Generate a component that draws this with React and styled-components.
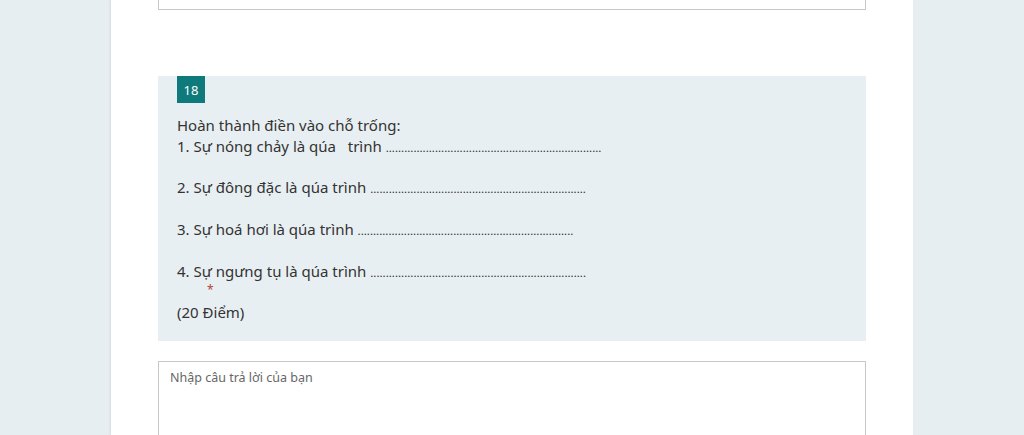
import React from "react";
import styled, { createGlobalStyle } from "styled-components";

const GlobalStyle = createGlobalStyle`
  html, body {
    margin: 0;
    padding: 0;
    background: #e6eef1;
    overflow: hidden;
  }
  body {
    font-family: "Noto Sans", "Open Sans", sans-serif;
  }
`;

const Page = styled.div`
  height: 435px;
  display: flex;
  justify-content: flex-start;
  padding-left: 111px;
`;

const Card = styled.div`
  width: 802px;
  background: #ffffff;
  box-shadow: -1px 0 2px rgba(0, 0, 0, 0.08);
  padding: 0 47px;
  box-sizing: border-box;
`;

const PrevAnswer = styled.div`
  height: 9px;
  border: 1px solid #c8c8c8;
  border-top: none;
  margin-bottom: 66px;
`;

const Question = styled.div`
  background: #e8eff2;
  padding: 0 19px 18px;
  height: 265px;
  box-sizing: border-box;
`;

const Badge = styled.div`
  display: inline-flex;
  align-items: center;
  justify-content: center;
  width: 28px;
  height: 27px;
  background: #0e7a7c;
  color: #ffffff;
  font-size: 13px;
  margin-bottom: 12px;
`;

const Line = styled.div`
  font-size: 15px;
  line-height: 20.8px;
  height: 20.8px;
  color: #333333;
  white-space: pre;
`;

const Dots = styled.span`
  font-size: 11.5px;
  line-height: 1;
  color: #2e2e2e;
`;

const Star = styled.div`
  color: #b0453a;
  font-size: 12px;
  line-height: 12px;
  padding-left: 30px;
  margin-top: 3px;
`;

const Points = styled.div`
  font-size: 15px;
  line-height: 20.8px;
  color: #333333;
  margin-top: 6px;
`;

const Answer = styled.div`
  margin-top: 20px;
  height: 120px;
  border: 1px solid #c8c8c8;
  padding: 7px 11px;
  font-size: 12.5px;
  color: #666666;
`;

const dots = ".".repeat(70);

const lines = [
  ["Hoàn thành điền vào chỗ trống:", false],
  ["1. Sự nóng chảy là qúa   trình ", true],
  ["", false],
  ["2. Sự đông đặc là qúa trình ", true],
  ["", false],
  ["3. Sự hoá hơi là qúa trình ", true],
  ["", false],
  ["4. Sự ngưng tụ là qúa trình ", true],
];

export default function App() {
  return (
    <>
      <GlobalStyle />
      <Page>
        <Card>
          <PrevAnswer />
          <Question>
            <Badge>18</Badge>
            {lines.map(([text, hasDots], i) => (
              <Line key={i}>
                {text}
                {hasDots && <Dots>{dots}</Dots>}
              </Line>
            ))}
            <Star>*</Star>
            <Points>(20 Điểm)</Points>
          </Question>
          <Answer>Nhập câu trả lời của bạn</Answer>
        </Card>
      </Page>
    </>
  );
}
